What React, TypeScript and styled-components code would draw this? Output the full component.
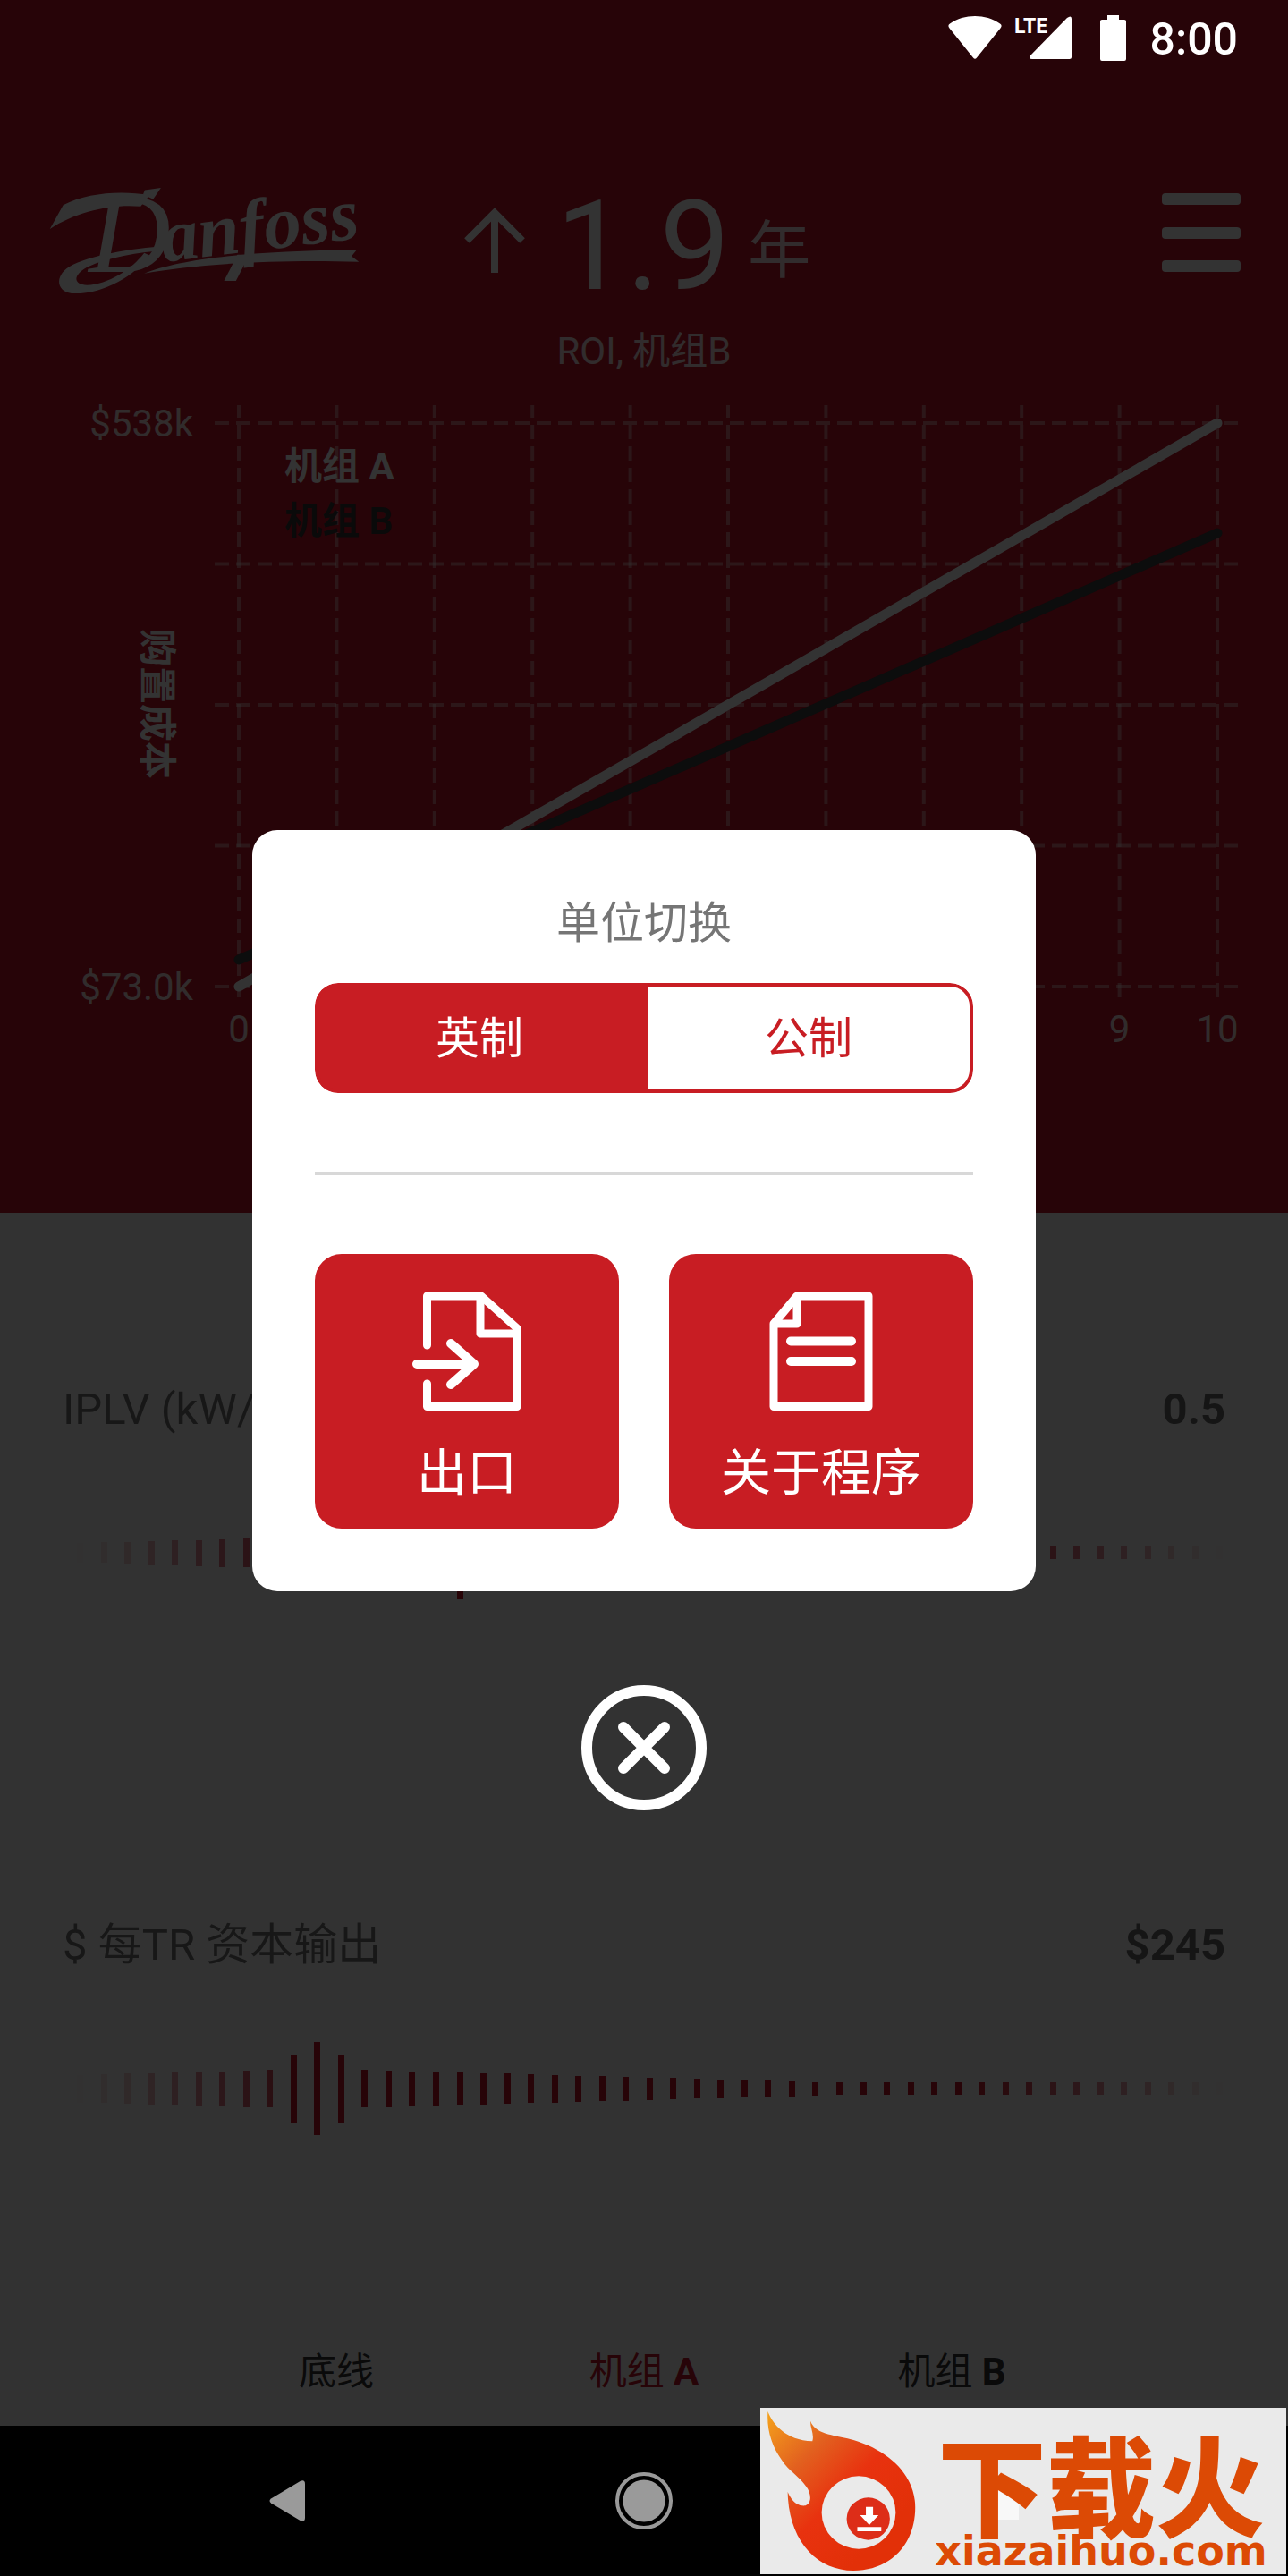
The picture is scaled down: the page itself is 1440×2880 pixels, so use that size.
import React, { useState } from "react";
import styled, { createGlobalStyle } from "styled-components";

const RED = "#c81d23";
const BRAND = "#c31428";
const SANS = `Roboto, "Noto Sans CJK SC", sans-serif`;

const GlobalStyle = createGlobalStyle`
  *, *::before, *::after { box-sizing: border-box; }
  body { margin: 0; background: #000; font-family: ${SANS}; }
  button { margin: 0; padding: 0; border: 0; background: none; font: inherit; color: inherit; cursor: pointer; }
  svg { display: block; overflow: visible; }
`;

const Screen = styled.div`
  position: relative;
  display: flex;
  flex-direction: column;
  min-height: 100vh;
`;

const Stage = styled.main`
  position: relative;
  flex: 1;
  display: flex;
  flex-direction: column;
`;

/* ---------- header ---------- */

const Header = styled.header`
  padding-bottom: 173px;
  background: ${BRAND};
  color: #fff;
`;

const StatusBar = styled.div`
  position: relative;
  z-index: 2;
  display: flex;
  align-items: center;
  justify-content: flex-end;
  height: 84px;
  padding-right: 56px;
`;

const SignalIcon = styled.svg`
  margin: 0 32px 0 16px;
`;

const Clock = styled.time`
  margin-left: 27px;
  padding-top: 4px;
  font-size: 50px;
  line-height: 60px;
  font-weight: 500;
`;

const TopRow = styled.div`
  display: grid;
  grid-template-columns: 1fr auto 1fr;
  align-items: start;
  padding: 109px 53px 0 54px;
`;

const Payback = styled.div`
  display: flex;
  align-items: center;
  padding-right: 16px;
`;

const PaybackValue = styled.strong`
  margin: 0 20px 0 35px;
  font-size: 140px;
  line-height: 164px;
  font-weight: 400;
`;

const PaybackUnit = styled.span`
  padding-top: 12px;
  font-size: 70px;
  line-height: 80px;
  opacity: 0.85;
`;

const MenuButton = styled.button`
  justify-self: end;
  display: flex;
  flex-direction: column;
  justify-content: space-between;
  width: 88px;
  height: 88px;
  margin-top: 23px;
`;

const MenuLine = styled.span`
  height: 13px;
  border-radius: 4px;
  background: #fff;
`;

const PaybackCaption = styled.p`
  margin: 6px 0 0;
  font-size: 42px;
  line-height: 60px;
  text-align: center;
  opacity: 0.85;
`;

const ChartSvg = styled.svg`
  width: 100%;
  height: auto;
  font-family: ${SANS};
  font-size: 42px;
`;

/* ---------- metrics ---------- */

const Panel = styled.section`
  flex: 1;
  display: flex;
  flex-direction: column;
  padding: 185px 70px 30px;
  background: #fafafa;
`;

const Metric = styled.div`
  display: flex;
  flex-direction: column;
  gap: 70px;
  & + & { margin-top: 349px; }
`;

const MetricHead = styled.div`
  display: flex;
  justify-content: space-between;
  font-size: 49px;
  line-height: 70px;
  color: #757575;
`;

const MetricValue = styled.output`
  font-weight: 700;
  color: #6b6b6b;
`;

const Ruler = styled.div`
  position: relative;
  display: flex;
  align-items: center;
  justify-content: space-between;
  height: 110px;
  padding: 0 3px 0 16px;
`;

const Tick = styled.span`
  width: 7px;
  background: ${BRAND};
`;

const RulerInput = styled.input`
  position: absolute;
  inset: 0;
  width: 100%;
  height: 100%;
  margin: 0;
  opacity: 0;
`;

const Tabs = styled.nav`
  display: grid;
  grid-template-columns: repeat(3, 1fr);
  margin-top: auto;
  padding: 60px 134px 0;
`;

const Tab = styled.button<{ $active?: boolean }>`
  font-size: 42px;
  line-height: 60px;
  color: ${(p) => (p.$active ? BRAND : "#333")};
  b { font-weight: 700; }
`;

/* ---------- dialog ---------- */

const Overlay = styled.div`
  position: absolute;
  inset: 0;
  display: grid;
  grid-template-rows: 1fr auto 1fr;
  justify-items: center;
  padding-bottom: 6px;
  background: rgba(0, 0, 0, 0.8);
`;

const Dialog = styled.section`
  grid-row: 2;
  width: 876px;
  max-width: 92%;
  padding: 70px;
  border-radius: 28px;
  background: #fff;
`;

const DialogTitle = styled.h2`
  margin: 0;
  font-size: 49px;
  line-height: 70px;
  font-weight: 400;
  text-align: center;
  color: #757575;
`;

const Toggle = styled.div`
  display: flex;
  height: 123px;
  margin-top: 31px;
  border-radius: 26px;
  overflow: hidden;
`;

const ToggleOption = styled.label<{ $on: boolean }>`
  flex: 1;
  display: flex;
  align-items: center;
  justify-content: center;
  padding-top: 4px;
  border: 4px solid ${RED};
  font-size: 49px;
  line-height: 70px;
  color: ${(p) => (p.$on ? "#fff" : RED)};
  background: ${(p) => (p.$on ? RED : "#fff")};
  cursor: pointer;
  &:first-child { border-radius: 26px 0 0 26px; }
  &:last-child { border-radius: 0 26px 26px 0; }
`;

const ToggleRadio = styled.input`
  appearance: none;
  width: 0;
  height: 0;
  margin: 0;
`;

const Divider = styled.hr`
  height: 4px;
  margin: 88px 0;
  border: 0;
  background: #d8d8d8;
`;

const Actions = styled.div`
  display: grid;
  grid-template-columns: 1fr 1fr;
  gap: 56px;
`;

const ActionButton = styled.button`
  display: flex;
  flex-direction: column;
  align-items: center;
  gap: 36px;
  padding: 42px 0 29px;
  border-radius: 30px;
  background: ${RED};
  color: #fff;
  font-size: 56px;
  line-height: 66px;
`;

const CloseButton = styled.button`
  grid-row: 3;
  align-self: start;
  margin-top: 105px;
`;

/* ---------- system navigation ---------- */

const SystemNav = styled.nav`
  display: grid;
  grid-template-columns: repeat(3, 1fr);
  align-items: center;
  justify-items: center;
  height: 168px;
  padding: 0 122px;
  background: #000;
`;

const SiteBadge = styled.a`
  position: absolute;
  right: 2px;
  bottom: 2px;
  z-index: 3;
  display: flex;
  width: 588px;
  height: 186px;
  background: linear-gradient(#f8f8f8, #f8f8f8) 247px 83px / 42px 42px no-repeat #eaeaea;
  color: #dc4a05;
  text-decoration: none;
`;

const SiteText = styled.span`
  flex: 1;
  display: flex;
  flex-direction: column;
  align-items: center;
  padding-top: 26px;
`;

const SiteName = styled.span`
  font-family: "Noto Sans CJK SC", sans-serif;
  font-size: 122px;
  line-height: 112px;
  font-weight: 900;
  white-space: nowrap;
`;

const SiteDomain = styled.span`
  font-family: "DejaVu Sans", sans-serif;
  font-size: 46px;
  line-height: 44px;
  font-weight: 700;
`;

/* ---------- drawings ---------- */

const Logo = () => (
  <svg width="348" height="137" viewBox="160 95 1045 410" fill="#fff" role="img" aria-label="Danfoss">
    <path d="M165 284L210 203C290 163 400 153 500 170L470 208C380 198 250 225 165 284Z" />
    <path d="M478 168L484 153L538 145L512 184Z" />
    <path d="M560 340C430 350 300 372 230 410C180 440 185 500 250 500C350 500 450 440 500 372L482 364C440 420 360 470 290 472C245 470 240 440 290 412C360 378 460 362 560 354Z" />
    <path d="M482 433C600 385 850 355 1195 354L1178 375L1203 394C900 386 650 402 482 433Z" />
    <g fontFamily="'Liberation Serif', serif" fontStyle="italic">
      <text x="296" y="428" fontSize="380">D</text>
      <text x="548" y="394" fontSize="250" fontWeight="700" transform="rotate(-7 548 394)">anfoss</text>
    </g>
    <path d="M750 458L795 370H835L790 458Z" />
  </svg>
);

const X0 = 267;
const X_STEP = 109.4;
const Y0 = 473;
const Y_STEP = 157.5;
const YEAR_LABELS = [0, 9, 10];

const CostChart = () => (
  <ChartSvg viewBox="0 423 1440 760" role="img" aria-label="购置成本">
    <g stroke="#fff" strokeOpacity="0.4" strokeWidth="4" strokeDasharray="16 8">
      {Array.from({ length: 5 }, (_, i) => (
        <line key={i} x1="240" x2="1384" y1={Y0 + i * Y_STEP} y2={Y0 + i * Y_STEP} />
      ))}
      {Array.from({ length: 11 }, (_, i) => (
        <line key={i} x1={X0 + i * X_STEP} x2={X0 + i * X_STEP} y1="453" y2="1115" strokeDashoffset="2" />
      ))}
    </g>
    <g strokeWidth="11" strokeLinecap="round">
      <line x1="267" y1="1073" x2="1361" y2="596" stroke="#3c4040" />
      <line x1="267" y1="1103" x2="1361" y2="473" stroke="#fff" />
    </g>
    <g fill="#fff" fillOpacity="0.85">
      <text x="216" y="488" textAnchor="end">$538k</text>
      <text x="216" y="1118" textAnchor="end">$73.0k</text>
      {YEAR_LABELS.map((year) => (
        <text key={year} x={X0 + year * X_STEP} y="1165" textAnchor="middle">{year}</text>
      ))}
    </g>
    <text x="318" y="536" fill="#fff" fontWeight="700">机组 A</text>
    <text x="318" y="597" fill="#333" fontWeight="700">机组 B</text>
    <text transform="translate(161 703) rotate(90)" fill="#fff" fontWeight="700">购置成本</text>
  </ChartSvg>
);

const TICKS = 49;

function tickHeight(i: number, at: number) {
  const d = Math.abs(i - at);
  if (d === 0) return 104;
  if (d === 1) return 77;
  return Math.max(14, Math.round(42 - (d - 2) * 1.4));
}

function tickOpacity(i: number, at: number) {
  if (Math.abs(i - at) < 2) return 1;
  return Math.min(1, (i + 0.3) / 11, (TICKS - 1 - i + 0.3) / 11);
}

type MetricProps = { id: string; label: string; value: string; initial: number };

const MetricSlider = ({ id, label, value, initial }: MetricProps) => {
  const [at, setAt] = useState(initial);
  return (
    <Metric>
      <MetricHead>
        <label htmlFor={id}>{label}</label>
        <MetricValue htmlFor={id}>{value}</MetricValue>
      </MetricHead>
      <Ruler>
        {Array.from({ length: TICKS }, (_, i) => (
          <Tick key={i} style={{ height: tickHeight(i, at), opacity: tickOpacity(i, at) }} />
        ))}
        <RulerInput id={id} type="range" min={0} max={TICKS - 1} value={at} onChange={(e) => setAt(Number(e.target.value))} />
      </Ruler>
    </Metric>
  );
};

const units = [
  { id: "imperial", label: "英制" },
  { id: "metric", label: "公制" },
];

export default function App() {
  const [unit, setUnit] = useState("imperial");

  return (
    <Screen>
      <GlobalStyle />
      <Stage>
        <Header>
          <StatusBar>
            <svg width="60" height="48" viewBox="0 0 60 48" fill="#fff">
              <path d="M1.500 13.500Q-1 10.500 2 8.500C18-2.800 42-2.800 58 8.500Q61 10.500 58.500 13.500L32 46.500Q30 49 28 46.500Z" />
            </svg>
            <SignalIcon width="62" height="50" viewBox="0 0 62 50" fill="#fff">
              <path d="M16 45L57 3Q62-.5 62 4V46.500Q62 49 59.500 49H18Q13 49 16 45Z" />
              <text x="-2" y="20" fontFamily="Roboto, sans-serif" fontSize="23" fontWeight="700">LTE</text>
            </SignalIcon>
            <svg width="29" height="51" viewBox="0 0 29 51" fill="#fff">
              <path d="M8 0H21V5H27Q29 5 29 7V49Q29 51 27 51H2Q0 51 0 49V7Q0 5 2 5H8Z" />
            </svg>
            <Clock>8:00</Clock>
          </StatusBar>
          <TopRow>
            <Logo />
            <Payback>
              <svg width="68" height="84" viewBox="0 0 68 84" fill="none" stroke="#fff" strokeWidth="8">
                <path d="M34 72V6M3 36L34 5L65 36" />
              </svg>
              <PaybackValue>1.9</PaybackValue>
              <PaybackUnit>年</PaybackUnit>
            </Payback>
            <MenuButton type="button" aria-label="菜单">
              <MenuLine />
              <MenuLine />
              <MenuLine />
            </MenuButton>
          </TopRow>
          <PaybackCaption>ROI, 机组B</PaybackCaption>
          <CostChart />
        </Header>

        <Panel>
          <MetricSlider id="iplv" label="IPLV (kW/TR)" value="0.5" initial={16} />
          <MetricSlider id="capital" label="$ 每TR 资本输出" value="$245" initial={10} />
          <Tabs>
            <Tab type="button">底线</Tab>
            <Tab type="button" $active>机组 <b>A</b></Tab>
            <Tab type="button">机组 <b>B</b></Tab>
          </Tabs>
        </Panel>

        <Overlay>
          <Dialog role="dialog" aria-labelledby="unit-title">
            <DialogTitle id="unit-title">单位切换</DialogTitle>
            <Toggle role="radiogroup" aria-labelledby="unit-title">
              {units.map((u) => (
                <ToggleOption key={u.id} htmlFor={u.id} $on={unit === u.id}>
                  <ToggleRadio id={u.id} type="radio" name="unit" checked={unit === u.id} onChange={() => setUnit(u.id)} />
                  {u.label}
                </ToggleOption>
              ))}
            </Toggle>
            <Divider />
            <Actions>
              <ActionButton type="button">
                <svg width="122" height="134" viewBox="0 0 122 134" fill="none" stroke="#fff" strokeWidth="9" strokeLinecap="round" strokeLinejoin="round">
                  <path d="M16.500 60V5H77L117 41V128.500H16.500V103" />
                  <path d="M76 6V47H117" />
                  <path d="M5 81H68M43 58L69 81L43 104" strokeWidth="10" />
                </svg>
                出口
              </ActionButton>
              <ActionButton type="button">
                <svg width="116" height="134" viewBox="0 0 116 134" fill="none" stroke="#fff" strokeWidth="9" strokeLinecap="round" strokeLinejoin="round">
                  <path d="M5 36L31 5H111V128.500H5Z" />
                  <path d="M31 6V36H6" />
                  <path d="M24 55.500H92M24 78H92" strokeWidth="10" />
                </svg>
                关于程序
              </ActionButton>
            </Actions>
          </Dialog>
          <CloseButton type="button" aria-label="关闭">
            <svg width="140" height="140" viewBox="0 0 140 140" fill="none" stroke="#fff" strokeWidth="12" strokeLinecap="round">
              <circle cx="70" cy="70" r="64" />
              <path d="M47 47L93 93M93 47L47 93" />
            </svg>
          </CloseButton>
        </Overlay>
      </Stage>

      <SystemNav>
        <button type="button" aria-label="返回">
          <svg width="40" height="46" viewBox="0 0 40 46" fill="#9a9a9a">
            <path d="M2 20.500L35 .8Q40-1 40 4V42Q40 47 35 45.200L2 25.500Q-1 23 2 20.500Z" />
          </svg>
        </button>
        <button type="button" aria-label="主页">
          <svg width="64" height="64" viewBox="0 0 64 64" fill="#9a9a9a">
            <circle cx="32" cy="32" r="23.500" />
            <circle cx="32" cy="32" r="30" fill="none" stroke="#9a9a9a" strokeWidth="4" />
          </svg>
        </button>
      </SystemNav>

      <SiteBadge href="#site">
        <svg width="174" height="186" viewBox="26 276 454 558" preserveAspectRatio="none">
          <defs>
            <linearGradient id="flame" x1="0" y1="0" x2="0.75" y2="0.8">
              <stop offset="0" stopColor="#f5a31c" />
              <stop offset="0.35" stopColor="#e2601f" />
              <stop offset="0.65" stopColor="#e8320f" />
              <stop offset="1" stopColor="#e23008" />
            </linearGradient>
          </defs>
          <path
            fill="url(#flame)"
            d="M48 288C62 330 100 385 178 388C184 365 172 345 172 320C190 370 250 366 300 385C400 420 478 500 478 610C478 740 400 822 298 822C190 822 108 720 106 558C118 590 135 607 158 604C178 595 174 560 160 540C140 505 110 490 88 450C60 405 44 350 48 288Z"
          />
          <ellipse cx="313" cy="627" rx="108" ry="122" fill="#eaeaea" />
          <ellipse cx="341" cy="648" rx="63" ry="71" fill="#dd2d18" />
          <path d="M334 608H355V636H371L344 669L317 636H334ZM309 676H379V690H309Z" fill="#fff" />
        </svg>
        <SiteText>
          <SiteName>下载火</SiteName>
          <SiteDomain>xiazaihuo.com</SiteDomain>
        </SiteText>
      </SiteBadge>
    </Screen>
  );
}
